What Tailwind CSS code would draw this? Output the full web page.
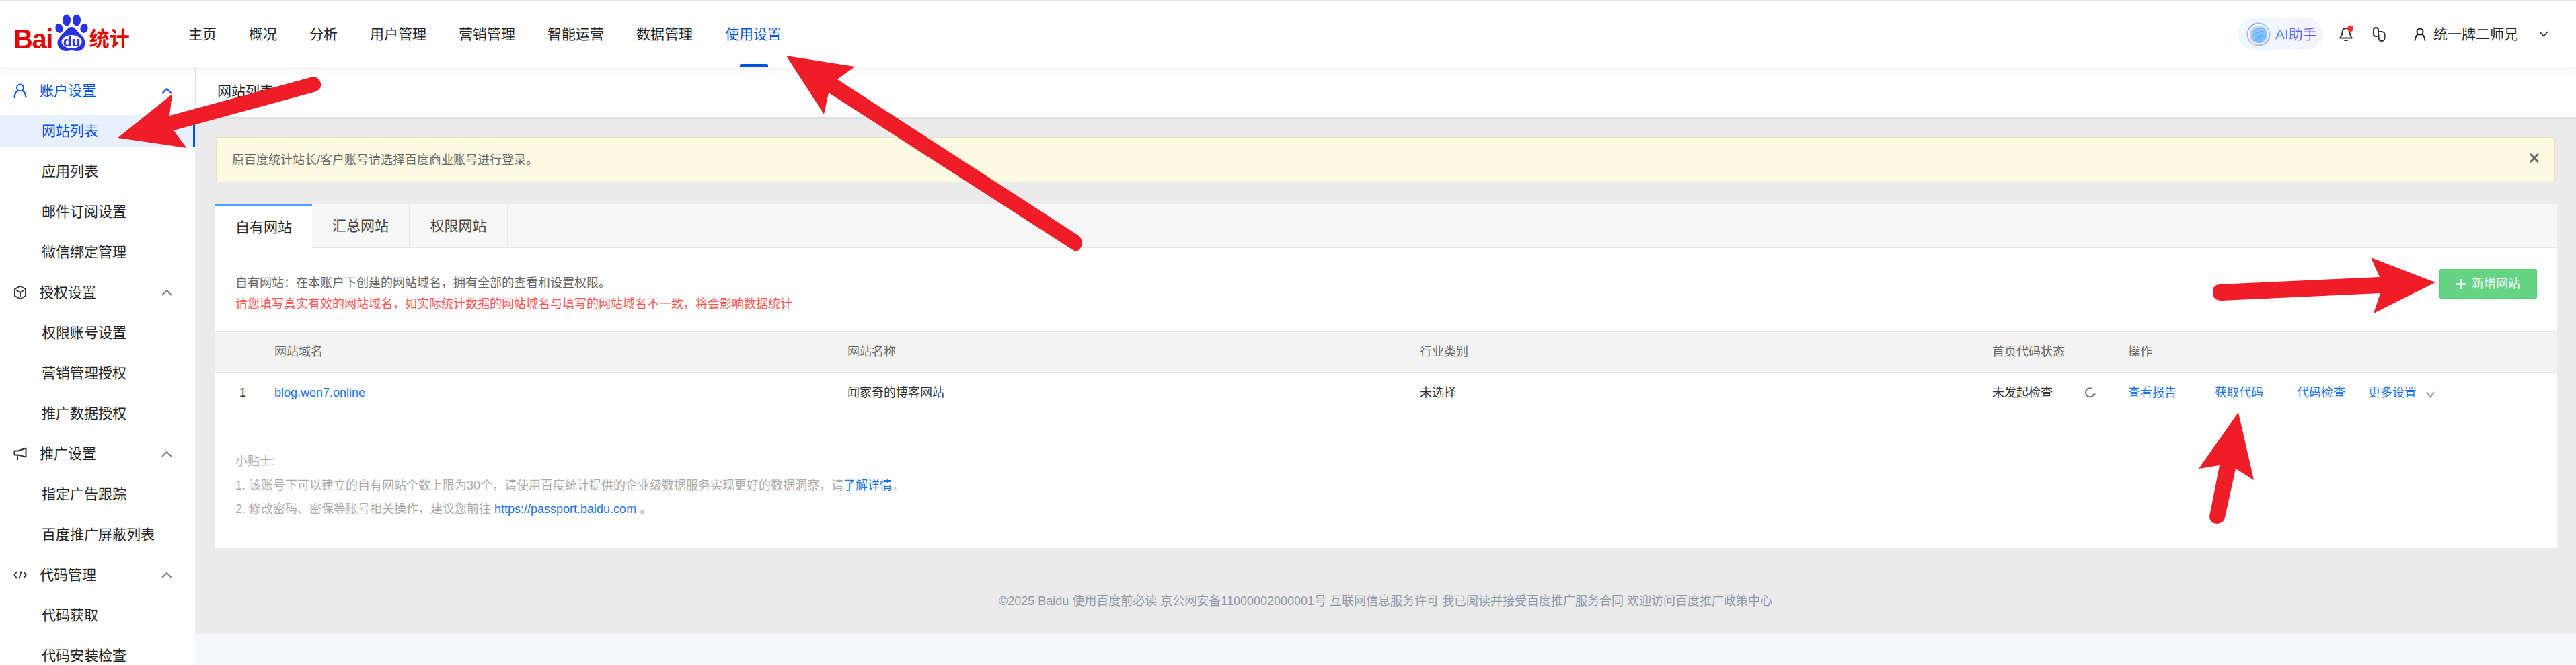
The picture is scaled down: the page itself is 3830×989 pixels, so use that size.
<!DOCTYPE html>
<html lang="zh-CN">
  <head>
    <meta charset="UTF-8" />
    <title>网站列表 - 百度统计</title>
    <script src="https://cdn.jsdelivr.net/npm/@tailwindcss/browser@4"></script>
  </head>
  <body class="relative w-[3830px] h-[989px] overflow-hidden bg-white text-[#222] font-['Liberation_Sans','Noto_Sans_CJK_SC',sans-serif]">
    <!-- top nav -->
    <header class="relative z-10 flex items-center h-[99px] border-t-2 border-[#e6e6e6] bg-white shadow-[0_4px_12px_rgba(0,0,0,0.06)]">
      <div class="flex items-center w-[280px] h-full pl-[20px]">
        <span class="text-[40px] leading-none font-bold text-[#e10601] tracking-[-1.5px] mt-[14px]">Bai</span>
        <svg class="w-[52px] h-[58px] ml-[3px] -mt-[5px]" viewBox="0 0 52 58">
          <ellipse cx="18" cy="11" rx="6" ry="8.5" fill="#2932e1" />
          <ellipse cx="33" cy="11" rx="6" ry="8.5" fill="#2932e1" />
          <ellipse cx="7" cy="23" rx="5.5" ry="7" transform="rotate(-15 7 23)" fill="#2932e1" />
          <ellipse cx="44" cy="23" rx="5.5" ry="7" transform="rotate(15 44 23)" fill="#2932e1" />
          <path d="M25.5 21c5 0 7 5 11 9 4 3.500 9 8 9 15 0 8-6 12-12 12-3 0-5-1-8-1s-5 1-8 1c-6 0-13-4-13-12 0-7 5-11 9-15 4-4 7-9 12-9z" fill="#2932e1" />
          <ellipse cx="25.500" cy="43" rx="15" ry="10" fill="#fff" />
          <text x="25.500" y="50" text-anchor="middle" font-size="21" font-weight="700" fill="#2932e1" font-family="Liberation Sans">du</text>
        </svg>
        <span class="text-[30px] leading-none font-bold text-[#e10601] mt-[14px]">统计</span>
      </div>
      <nav class="flex items-center h-full gap-[48px] text-[21px]">
        <a class="flex items-center h-full">主页</a>
        <a class="flex items-center h-full">概况</a>
        <a class="flex items-center h-full">分析</a>
        <a class="flex items-center h-full">用户管理</a>
        <a class="flex items-center h-full">营销管理</a>
        <a class="flex items-center h-full">智能运营</a>
        <a class="flex items-center h-full">数据管理</a>
        <a class="relative flex items-center h-full text-[#0052e6]">使用设置<span class="absolute bottom-0 left-[22px] w-[42px] h-[4px] rounded-t-[2px] bg-[#0052e6]"></span></a>
      </nav>
      <div class="flex items-center ml-auto h-full">
        <div class="flex items-center w-[127px] h-[47px] rounded-full pl-[13px] bg-gradient-to-r from-[#eef9ff] to-[#f5f2ff]">
          <svg class="w-[36px] h-[36px]" viewBox="0 0 36 36">
            <defs>
              <linearGradient id="ring" x1="1" y1="0" x2="0" y2="1"><stop offset="0" stop-color="#8fdcff" /><stop offset="0.5" stop-color="#8f9cf5" /><stop offset="1" stop-color="#eab4f4" /></linearGradient>
              <radialGradient id="ball" cx="0.6" cy="0.65" r="0.75"><stop offset="0" stop-color="#63bcff" /><stop offset="0.55" stop-color="#93c3f8" /><stop offset="1" stop-color="#e6eefc" /></radialGradient>
            </defs>
            <circle cx="18" cy="18" r="16.500" fill="#fff" stroke="url(#ring)" stroke-width="2" />
            <circle cx="18" cy="18" r="13.500" fill="url(#ball)" />
            <path d="M8 16c5-7 12-8 19-6M9 21c6-7 12-9 19-6M13 26c5-5 10-7 15-5" fill="none" stroke="#5a86f2" stroke-opacity="0.4" stroke-width="1.800" />
          </svg>
          <span class="ml-[7px] text-[21px] bg-gradient-to-r from-[#4a86ff] to-[#6a4dff] bg-clip-text text-transparent">AI助手</span>
        </div>
        <div class="relative ml-[24px] w-[20px] h-[22px]">
          <svg class="w-[20px] h-[22px]" viewBox="0 0 20 22" fill="none" stroke="#333" stroke-width="2">
            <path d="M10 2c-4 0-5.500 3-5.500 6.500 0 4-2 6-3.500 8h18c-1.500-2-3.500-4-3.500-8C15.500 5 14 2 10 2z" stroke-linejoin="round" />
            <path d="M8 20h4" stroke-linecap="round" />
          </svg>
          <span class="absolute -top-[2px] left-[12px] w-[9px] h-[9px] rounded-full bg-[#ef3333]"></span>
        </div>
        <svg class="ml-[30px] w-[19px] h-[22px]" viewBox="0 0 19 22" fill="none" stroke="#333" stroke-width="2" stroke-linecap="round" stroke-linejoin="round">
          <path d="M6 14H4.500C2.500 14 1 12.500 1 10.500v-6C1 2.500 2.500 1 4.500 1S8 2.500 8 4.500V12" />
          <path d="M8 7h5c2.500 0 4.500 2 4.500 4.500v5c0 2.500-2 4.500-4.500 4.500s-4.500-2-4.500-4.500V12" />
        </svg>
        <svg class="ml-[42px] w-[18px] h-[20px]" viewBox="0 0 18 20" fill="none" stroke="#222" stroke-width="2" stroke-linecap="round">
          <circle cx="9" cy="6" r="4.500" />
          <path d="M1.500 19c.5-5 3-8.500 4.500-9M16.500 19c-.5-5-3-8.500-4.500-9" />
        </svg>
        <span class="ml-[11px] text-[21px]">统一牌二师兄</span>
        <svg class="ml-[31px] mr-[41px] w-[14px] h-[9px]" viewBox="0 0 14 9" fill="none" stroke="#333" stroke-width="1.600"><path d="M1 1l6 6.500L13 1" /></svg>
      </div>
    </header>

    <div class="flex h-[890px]">
      <!-- sidebar -->
      <aside class="w-[290px] shrink-0 pt-[12px] overflow-hidden bg-white text-[21px]">
        <div class="flex items-center h-[48px] pl-[20px] text-[#0052e6]">
          <svg class="w-[20px] h-[22px]" viewBox="0 0 20 22" fill="none" stroke="#0052e6" stroke-width="2" stroke-linecap="round">
            <circle cx="10" cy="6.500" r="5" />
            <path d="M1.500 21c.5-5.500 3-9 5-10M18.500 21c-.5-5.500-3-9-5-10" />
          </svg>
          <span class="ml-[19px]">账户设置</span>
          <svg class="ml-auto mr-[34px] w-[16px] h-[10px]" viewBox="0 0 16 10" fill="none" stroke="#0052e6" stroke-width="2"><path d="M1 9l7-7 7 7" /></svg>
        </div>
        <div class="flex items-center h-[48px] mt-[12px] pl-[62px] bg-[#e8f0fe] border-r-[3px] border-[#0052e6] text-[#0052e6]">网站列表</div>
        <div class="flex items-center h-[48px] mt-[12px] pl-[62px]">应用列表</div>
        <div class="flex items-center h-[48px] mt-[12px] pl-[62px]">邮件订阅设置</div>
        <div class="flex items-center h-[48px] mt-[12px] pl-[62px]">微信绑定管理</div>

        <div class="flex items-center h-[48px] mt-[12px] pl-[20px]">
          <svg class="w-[20px] h-[22px]" viewBox="0 0 20 22" fill="none" stroke="#333" stroke-width="2" stroke-linejoin="round">
            <path d="M10 1.500l8 4.500v10l-8 4.500-8-4.500V6z" />
            <path d="M4 7.500l6 3.500 6-3.500M10 11v6" />
          </svg>
          <span class="ml-[19px]">授权设置</span>
          <svg class="ml-auto mr-[34px] w-[16px] h-[10px]" viewBox="0 0 16 10" fill="none" stroke="#7a8394" stroke-width="2"><path d="M1 9l7-7 7 7" /></svg>
        </div>
        <div class="flex items-center h-[48px] mt-[12px] pl-[62px]">权限账号设置</div>
        <div class="flex items-center h-[48px] mt-[12px] pl-[62px]">营销管理授权</div>
        <div class="flex items-center h-[48px] mt-[12px] pl-[62px]">推广数据授权</div>

        <div class="flex items-center h-[48px] mt-[12px] pl-[20px]">
          <svg class="w-[20px] h-[20px]" viewBox="0 0 20 20" fill="none" stroke="#333" stroke-width="2" stroke-linejoin="round">
            <path d="M1.500 5.500h5L18.500 1.500v13l-12-3h-5zM6 12v7" />
          </svg>
          <span class="ml-[19px]">推广设置</span>
          <svg class="ml-auto mr-[34px] w-[16px] h-[10px]" viewBox="0 0 16 10" fill="none" stroke="#7a8394" stroke-width="2"><path d="M1 9l7-7 7 7" /></svg>
        </div>
        <div class="flex items-center h-[48px] mt-[12px] pl-[62px]">指定广告跟踪</div>
        <div class="flex items-center h-[48px] mt-[12px] pl-[62px]">百度推广屏蔽列表</div>

        <div class="flex items-center h-[48px] mt-[12px] pl-[20px]">
          <svg class="w-[20px] h-[14px]" viewBox="0 0 20 14" fill="none" stroke="#333" stroke-width="2">
            <path d="M5 2L1.500 7 5 12M15 2l3.500 5L15 12M11.500 1.500l-3 11" />
          </svg>
          <span class="ml-[19px]">代码管理</span>
          <svg class="ml-auto mr-[34px] w-[16px] h-[10px]" viewBox="0 0 16 10" fill="none" stroke="#7a8394" stroke-width="2"><path d="M1 9l7-7 7 7" /></svg>
        </div>
        <div class="flex items-center h-[48px] mt-[12px] pl-[62px]">代码获取</div>
        <div class="flex items-center h-[48px] mt-[12px] pl-[62px]">代码安装检查</div>
      </aside>

      <!-- main -->
      <main class="flex flex-col flex-1 min-w-0 bg-[#ebebeb]">
        <div class="flex items-center h-[75px] pl-[32px] pb-[2px] border-l border-[#e6e6e6] bg-white text-[21px] shadow-[0_2px_4px_rgba(0,0,0,0.08)]">网站列表</div>

        <div class="flex items-center justify-between h-[67px] mt-[30px] ml-[31px] mr-[31px] pl-[23px] pr-[23px] rounded-[3px] border border-[#e4e0c4] bg-[#fffbe3] text-[18px] text-[#666]">
          <span class="pt-[2px]">原百度统计站长/客户账号请选择百度商业账号进行登录。</span>
          <svg class="w-[14px] h-[14px] -mt-[5px]" viewBox="0 0 14 14" fill="none" stroke="#666" stroke-width="3"><path d="M1 1l12 12M13 1L1 13" /></svg>
        </div>

        <section class="h-[512px] mt-[32px] ml-[30px] mr-[28px] bg-white text-[18px]">
          <div class="flex h-[66px] border-y border-[#e5e5e5] bg-[#f7f7f7] text-[21px] text-[#444]">
            <div class="flex items-center justify-center w-[144px] -mb-px border-t-4 -mt-px border-[#4ca0ff] bg-white text-[#222]">自有网站</div>
            <div class="flex items-center justify-center w-[145px] border-r border-[#e8e8e8]">汇总网站</div>
            <div class="flex items-center justify-center w-[146px] border-r border-[#e8e8e8]">权限网站</div>
          </div>

          <div class="flex items-start justify-between h-[124px] pl-[30px] pr-[30px]">
            <div class="pt-[37px] leading-[31px]">
              <p class="text-[#666]">自有网站：在本账户下创建的网站域名，拥有全部的查看和设置权限。</p>
              <p class="text-[#f55]">请您填写真实有效的网站域名，如实际统计数据的网站域名与填写的网站域名不一致，将会影响数据统计</p>
            </div>
            <button class="flex items-center justify-center w-[145px] h-[44px] mt-[31px] rounded-[2px] border border-[#5ccc7c] bg-[#64d484] text-white">
              <svg class="w-[15px] h-[15px] mr-[8px]" viewBox="0 0 15 15" fill="none" stroke="#fff" stroke-width="2.500"><path d="M7.500 0v15M0 7.500h15" /></svg>
              新增网站
            </button>
          </div>

          <div class="grid grid-cols-[88px_852px_851px_851px_202px_1fr] items-center h-[61px] border-y border-[#e3e3e3] bg-[#f3f3f3] text-[#666]">
            <span></span>
            <span>网站域名</span>
            <span>网站名称</span>
            <span>行业类别</span>
            <span>首页代码状态</span>
            <span>操作</span>
          </div>
          <div class="grid grid-cols-[88px_852px_851px_851px_202px_1fr] items-center h-[59px] pt-[2px] border-b border-[#ededed] text-[#333]">
            <span class="pl-[36px]">1</span>
            <a class="text-[#1a73e8]">blog.wen7.online</a>
            <span>闻家奇的博客网站</span>
            <span>未选择</span>
            <span class="flex items-center">未发起检查
              <svg class="ml-[47px] w-[18px] h-[18px]" viewBox="0 0 18 18" fill="none" stroke="#777" stroke-width="2"><path d="M14.500 11A6.500 6.500 0 1 1 12 3.300" /><path d="M12.500 10.500h4.500L14.500 14.500z" fill="#4a7ab8" stroke="none" /></svg>
            </span>
            <span class="flex items-center text-[#1a73e8]">
              <a>查看报告</a>
              <a class="ml-[57px]">获取代码</a>
              <a class="ml-[50px]">代码检查</a>
              <a class="ml-[34px]">更多设置</a>
              <svg class="ml-[14px] mt-[6px] w-[13px] h-[10px]" viewBox="0 0 13 10" fill="none" stroke="#aaa" stroke-width="2.500"><path d="M1 1l5.500 7.500L12 1" /></svg>
            </span>
          </div>

          <div class="pt-[56px] pl-[30px] leading-[35.500px] text-[#aaa]">
            <p>小贴士:</p>
            <p>1. 该账号下可以建立的自有网站个数上限为30个，请使用百度统计提供的企业级数据服务实现更好的数据洞察，请<a class="text-[#1a73e8]">了解详情</a>。</p>
            <p>2. 修改密码、密保等账号相关操作，建议您前往 <a class="text-[#1a73e8]">https://passport.baidu.com</a> 。</p>
          </div>
        </section>

        <footer class="flex items-center justify-center h-[128px] mt-auto pt-[30px] text-[18px] text-[#8f98a8]">©2025 Baidu 使用百度前必读 京公网安备11000002000001号 互联网信息服务许可 我已阅读并接受百度推广服务合同 欢迎访问百度推广政策中心</footer>
        <div class="h-[46px] shrink-0 bg-[#f4f6fa]"></div>
      </main>
    </div>

    <!-- red annotation arrows drawn over the screenshot -->
    <svg class="absolute top-0 left-0 z-20 w-[3830px] h-[989px] pointer-events-none" viewBox="0 0 3830 989" fill="#ee1d27">
      <path d="M175 205L256 140 252 172 462 115Q474 112 477 124 479 133 467 137L258 194 277.500 220z" />
      <path d="M1169 83L1271 99 1245 118 1603 350Q1610 356 1609 363 1606 375 1597 373L1232 138 1225 170z" />
      <path d="M3525 383L3621 420 3529 466 3539 436 3303 447Q3290 447 3290 435 3290 424 3299 423L3538 412z" />
      <path d="M3328 613L3351 714 3324 697 3308 770Q3305 779 3296 779 3285 778 3285 768L3300 692 3269 697z" />
    </svg>
  </body>
</html>
